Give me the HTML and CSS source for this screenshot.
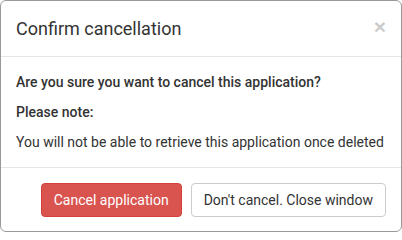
FILE: index.html
```html
<!DOCTYPE html>
<html>
<head>
<meta charset="utf-8">
<link rel="stylesheet" href="styles.css">
</head>
<body>
<div class="modal">
  <div class="modal-header">
    <h4 class="modal-title">Confirm cancellation</h4>
    <button class="close" type="button">×</button>
  </div>
  <div class="modal-body">
    <p class="strong">Are you sure you want to cancel this application?</p>
    <p class="strong">Please note:</p>
    <p class="last">You will not be able to retrieve this application once deleted</p>
  </div>
  <div class="modal-footer">
    <button class="btn btn-danger" type="button">Cancel application</button>
    <button class="btn btn-default" type="button">Don't cancel. Close window</button>
  </div>
</div>
</body>
</html>
```
FILE: styles.css
```css
html, body {
  margin: 0;
  padding: 0;
  background: #fff;
}
body {
  font-family: Roboto, "Liberation Sans", sans-serif;
  font-size: 14px;
  line-height: 20px;
  color: #333;
}
.modal {
  box-sizing: border-box;
  width: 402px;
  height: 232px;
  border: 1px solid #999;
  border-radius: 6px;
  background: #fff;
  display: flex;
  flex-direction: column;
}
.modal-header {
  display: flex;
  justify-content: space-between;
  align-items: flex-start;
  padding: 15px;
  border-bottom: 1px solid #e5e5e5;
  height: 25px;
  box-sizing: content-box;
}
.modal-title {
  margin: 0;
  font-size: 18px;
  font-weight: 400;
  line-height: 26px;
  color: #333;
}
.close {
  border: 0;
  background: transparent;
  padding: 0;
  margin-top: 0;
  font-family: "Liberation Sans", sans-serif;
  font-size: 21px;
  font-weight: 700;
  line-height: 21px;
  color: #000;
  opacity: 0.2;
  cursor: pointer;
}
.modal-body {
  padding: 15px;
  flex: 1;
}
.modal-body p {
  margin: 0 0 10px;
}
.modal-body p.strong {
  font-weight: 500;
}
.modal-body p.last {
  margin-bottom: 0;
}
.modal-footer {
  display: flex;
  justify-content: flex-end;
  gap: 9px;
  padding: 15px;
  border-top: 1px solid #e5e5e5;
}
.btn {
  box-sizing: border-box;
  height: 34px;
  padding: 6px 12px;
  font-family: Roboto, "Liberation Sans", sans-serif;
  font-size: 14px;
  line-height: 20px;
  border: 1px solid transparent;
  border-radius: 4px;
  cursor: pointer;
}
.btn-danger {
  color: #fff;
  background: #d9534f;
  border-color: #d43f3a;
}
.btn-default {
  color: #333;
  background: #fff;
  border-color: #ccc;
}
```
